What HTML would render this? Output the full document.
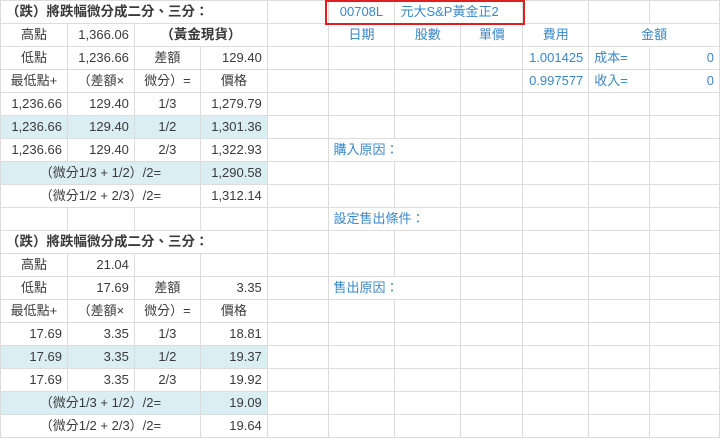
<!DOCTYPE html>
<html><head><meta charset="utf-8"><style>
html,body{margin:0;width:720px;height:441px;overflow:hidden;background:#fff}
body{font-family:"Liberation Sans","Noto Sans CJK TC",sans-serif;font-size:13px;color:#3a3a3a;position:relative}
table{border-collapse:collapse;table-layout:fixed;position:absolute;left:0;top:0}
td{height:22px;padding:0 5px;border:1px solid #dcdcdc;white-space:nowrap;overflow:visible;line-height:22px}
.r{text-align:right}.c{text-align:center}.b{font-weight:bold;font-size:13.5px}
.bl{color:#3a87c8}.h{background:#daeef3}
#red{position:absolute;left:325px;top:0;width:196px;height:21px;border:2px solid #e02020}
</style></head><body>
<table>
<colgroup><col style="width:67px"><col style="width:67px"><col style="width:66px"><col style="width:67px"><col style="width:61px"><col style="width:67px"><col style="width:66px"><col style="width:62px"><col style="width:66px"><col style="width:61px"><col style="width:70px"></colgroup>
<tr><td colspan="4" class="b">（跌）將跌幅微分成二分、三分：</td><td></td><td class="c bl">00708L</td><td colspan="2" class="bl">元大S&amp;P黃金正2</td><td></td><td></td><td></td></tr>
<tr><td class="c">高點</td><td class="r">1,366.06</td><td colspan="2" class="c b">（黃金現貨）</td><td></td><td class="c bl">日期</td><td class="c bl">股數</td><td class="c bl">單價</td><td class="c bl">費用</td><td colspan="2" class="c bl">金額</td></tr>
<tr><td class="c">低點</td><td class="r">1,236.66</td><td class="c">差額</td><td class="r">129.40</td><td></td><td></td><td></td><td></td><td class="r bl">1.001425</td><td class="bl">成本=</td><td class="r bl">0</td></tr>
<tr><td class="c">最低點+</td><td class="c">（差額×</td><td class="c">微分）=</td><td class="c">價格</td><td></td><td></td><td></td><td></td><td class="r bl">0.997577</td><td class="bl">收入=</td><td class="r bl">0</td></tr>
<tr><td class="r">1,236.66</td><td class="r">129.40</td><td class="c">1/3</td><td class="r">1,279.79</td><td></td><td></td><td></td><td></td><td></td><td></td><td></td></tr>
<tr><td class="r h">1,236.66</td><td class="r h">129.40</td><td class="c h">1/2</td><td class="r h">1,301.36</td><td></td><td></td><td></td><td></td><td></td><td></td><td></td></tr>
<tr><td class="r">1,236.66</td><td class="r">129.40</td><td class="c">2/3</td><td class="r">1,322.93</td><td></td><td colspan="2" class="bl">購入原因：</td><td></td><td></td><td></td><td></td></tr>
<tr><td colspan="3" class="c h">（微分1/3 + 1/2）/2=</td><td class="r h">1,290.58</td><td></td><td></td><td></td><td></td><td></td><td></td><td></td></tr>
<tr><td colspan="3" class="c">（微分1/2 + 2/3）/2=</td><td class="r">1,312.14</td><td></td><td></td><td></td><td></td><td></td><td></td><td></td></tr>
<tr><td></td><td></td><td></td><td></td><td></td><td colspan="2" class="bl">設定售出條件：</td><td></td><td></td><td></td><td></td></tr>
<tr><td colspan="4" class="b">（跌）將跌幅微分成二分、三分：</td><td></td><td></td><td></td><td></td><td></td><td></td><td></td></tr>
<tr><td class="c">高點</td><td class="r">21.04</td><td></td><td></td><td></td><td></td><td></td><td></td><td></td><td></td><td></td></tr>
<tr><td class="c">低點</td><td class="r">17.69</td><td class="c">差額</td><td class="r">3.35</td><td></td><td colspan="2" class="bl">售出原因：</td><td></td><td></td><td></td><td></td></tr>
<tr><td class="c">最低點+</td><td class="c">（差額×</td><td class="c">微分）=</td><td class="c">價格</td><td></td><td></td><td></td><td></td><td></td><td></td><td></td></tr>
<tr><td class="r">17.69</td><td class="r">3.35</td><td class="c">1/3</td><td class="r">18.81</td><td></td><td></td><td></td><td></td><td></td><td></td><td></td></tr>
<tr><td class="r h">17.69</td><td class="r h">3.35</td><td class="c h">1/2</td><td class="r h">19.37</td><td></td><td></td><td></td><td></td><td></td><td></td><td></td></tr>
<tr><td class="r">17.69</td><td class="r">3.35</td><td class="c">2/3</td><td class="r">19.92</td><td></td><td></td><td></td><td></td><td></td><td></td><td></td></tr>
<tr><td colspan="3" class="c h">（微分1/3 + 1/2）/2=</td><td class="r h">19.09</td><td></td><td></td><td></td><td></td><td></td><td></td><td></td></tr>
<tr><td colspan="3" class="c">（微分1/2 + 2/3）/2=</td><td class="r">19.64</td><td></td><td></td><td></td><td></td><td></td><td></td><td></td></tr>
</table>
<div id="red"></div>
</body></html>
